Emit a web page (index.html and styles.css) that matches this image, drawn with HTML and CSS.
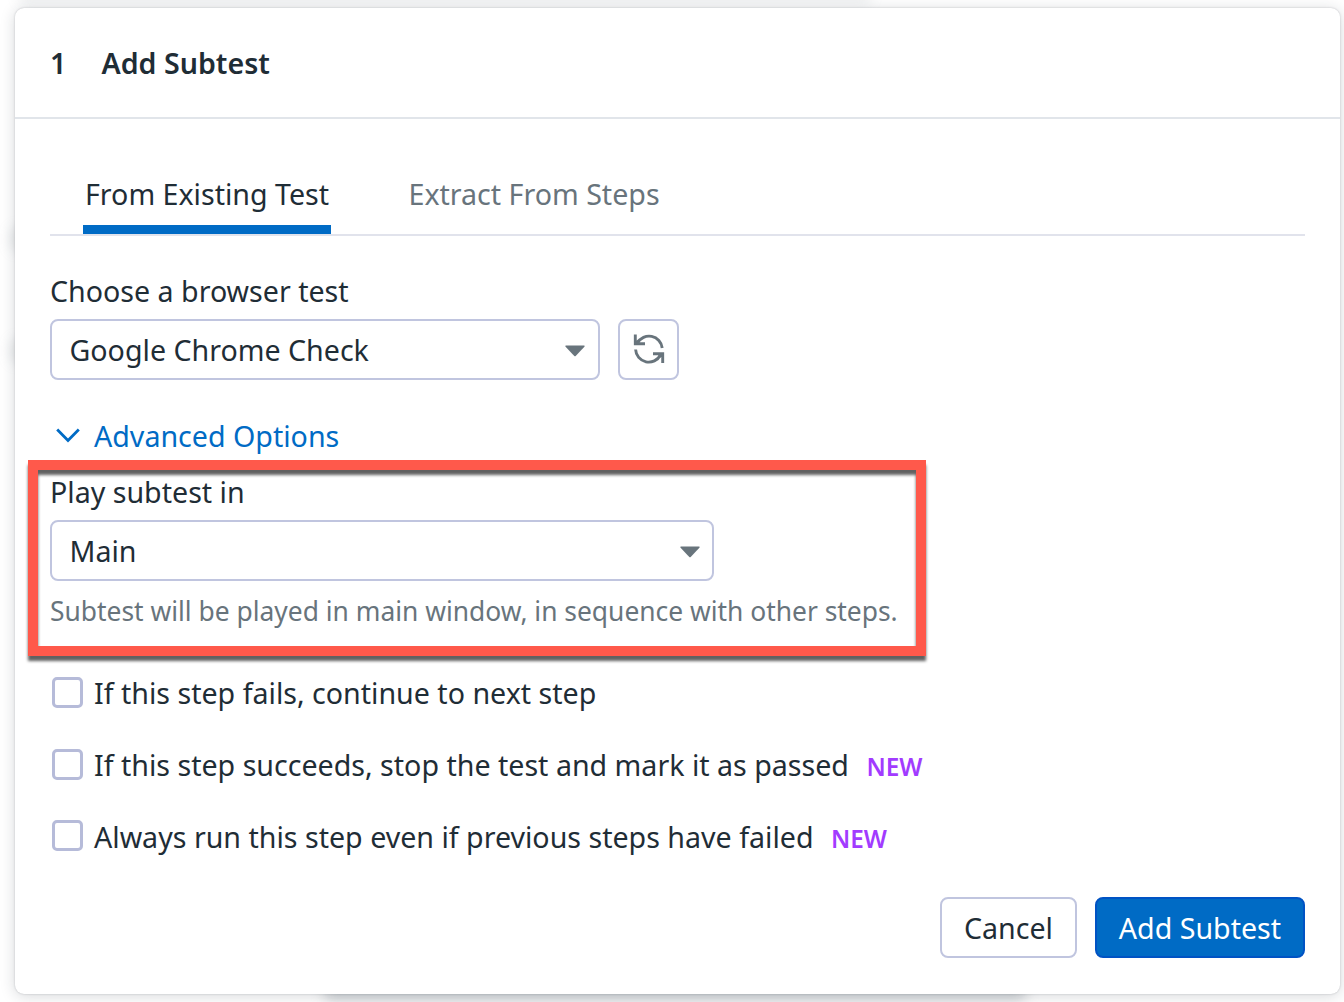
FILE: index.html
```html
<!DOCTYPE html>
<html lang="en">
<head>
<meta charset="utf-8">
<title>Add Subtest</title>
<link rel="stylesheet" href="styles.css">
</head>
<body>
<div class="haze haze-top"></div>
<div class="haze haze-left"></div>
<div class="haze haze-left haze-left-low"></div>
<div class="haze haze-bottom"></div>
<main class="modal">
  <header class="modal-header"><span class="step">1</span><h1>Add Subtest</h1></header>
  <section class="modal-body">
    <nav class="tabs">
      <a class="tab active">From Existing Test</a>
      <a class="tab">Extract From Steps</a>
    </nav>
    <div class="field browser-test">
      <label>Choose a browser test</label>
      <div class="field-row">
        <div class="select select-test"><span>Google Chrome Check</span>
          <svg class="caret" width="20" height="12" viewBox="0 0 20 12"><path d="M1 .5h18q1.2.3.4 1.200L10.700 11q-.7.6-1.400 0L.6 1.700Q-.2.800 1 .5z"/></svg>
        </div>
        <button class="icon-button" aria-label="Refresh">
          <svg width="32" height="32" viewBox="0 0 32 32" fill="none" stroke="currentColor" stroke-width="2.900">
            <path d="M4.500 10A13.200 13.200 0 0 1 29.200 15"/>
            <path d="M2.300 1.500v9.300h9.700M2.500 10.500l3.500-3"/>
            <path d="M2.600 16.500A13.200 13.200 0 0 0 27.500 22"/>
            <path d="M29.700 30v-9.300h-9.700M29.500 21l-3.500 3"/>
          </svg>
        </button>
      </div>
    </div>
    <a class="advanced">
      <svg width="24" height="15" viewBox="0 0 24 15" fill="none" stroke="currentColor" stroke-width="2.800"><path d="M1.200 1.500 12 12.400 22.800 1.500"/></svg>
      <span>Advanced Options</span>
    </a>
    <div class="field play-in">
      <label>Play subtest in</label>
      <div class="select select-window"><span>Main</span>
        <svg class="caret" width="20" height="12" viewBox="0 0 20 12"><path d="M1 .5h18q1.200.3.4 1.200L10.700 11q-.7.6-1.400 0L.6 1.700Q-.2.800 1 .5z"/></svg>
      </div>
      <p class="hint">Subtest will be played in main window, in sequence with other steps.</p>
    </div>
    <div class="checks">
      <label class="check"><i class="box"></i><span>If this step fails, continue to next step</span></label>
      <label class="check"><i class="box"></i><span>If this step succeeds, stop the test and mark it as passed</span><b class="new">NEW</b></label>
      <label class="check"><i class="box"></i><span>Always run this step even if previous steps have failed</span><b class="new">NEW</b></label>
    </div>
    <footer class="actions">
      <button class="button cancel">Cancel</button>
      <button class="button primary">Add Subtest</button>
    </footer>
  </section>
</main>
</body>
</html>
```
FILE: styles.css
```css
*, *::after { box-sizing: border-box; }
body {
  margin: 0;
  width: 1344px;
  height: 1002px;
  padding: 8px 4px 8px 15px;
  overflow: hidden;
  position: relative;
  background: #fff;
  color: #1f2d36;
  font: 28.6px/40px "Noto Sans", sans-serif;
}
button { font: inherit; color: inherit; margin: 0; padding: 0; }
.haze { position: absolute; background: #8d969d; filter: blur(7px); }
.haze-top { left: 20px; top: -9px; width: 850px; height: 11px; opacity: .2; }
.haze-left { left: 12px; top: 228px; width: 12px; height: 22px; opacity: .25; }
.haze-left-low { top: 340px; }
.haze-bottom { left: 325px; top: 985px; width: 700px; height: 14px; opacity: .5; }
.modal {
  position: relative;
  height: 986px;
  background: #fff;
  border-radius: 9px;
  box-shadow: 0 0 2px rgba(30, 40, 50, .25), 0 2px 15px rgba(30, 40, 50, .18);
}
.modal-header {
  display: flex;
  align-items: center;
  height: 111px;
  padding: 0 35px;
  border-bottom: 2px solid #e1e5ea;
  font-weight: 600;
}
.step { width: 51.5px; }
.modal-header h1 { margin: 0; font: inherit; }
.modal-body { padding: 55px 35px 0; }
.tabs {
  display: flex;
  gap: 75.5px;
  height: 62px;
  padding-left: 33px;
  border-bottom: 2px solid #e1e3ec;
}
.tab { height: 60px; padding: 0 2px; color: #68747c; white-space: nowrap; }
.tab.active { width: 248px; border-bottom: 9px solid #006bc5; color: #1f2d36; }
.field { display: flex; flex-direction: column; align-items: flex-start; }
.browser-test { margin-top: 35px; gap: 8px; }
.field-row { display: flex; gap: 18px; }
.select {
  display: flex;
  align-items: center;
  justify-content: space-between;
  height: 61px;
  padding: 0 12px 0 17.5px;
  border: 2px solid #c0c5df;
  border-radius: 8px;
}
.select-test { width: 550px; padding-right: 13px; }
.select-window { width: 664px; }
.caret { margin-top: 2px; fill: #68747c; }
.icon-button {
  display: flex;
  align-items: center;
  justify-content: center;
  width: 61px;
  height: 61px;
  border: 2px solid #c0c5df;
  border-radius: 8px;
  background: #fff;
  color: #68747c;
}
.icon-button svg { margin-top: -1px; }
.advanced { display: flex; align-items: center; gap: 14px; margin-top: 36px; padding-left: 6px; color: #006bc5; }
.advanced svg { flex: none; margin-top: -2px; }
.play-in { position: relative; margin-top: 16px; gap: 8px; }
.play-in::after {
  content: "";
  position: absolute;
  left: -22px;
  top: -12px;
  width: 898px;
  height: 196px;
  border: 10px solid #ff594b;
  filter: drop-shadow(0 5px 1.500px rgba(0, 0, 0, .62));
}
.hint { margin: 2px 0 0; color: #68747c; font-size: 26.4px; white-space: nowrap; }
.checks { display: flex; flex-direction: column; gap: 32px; margin-top: 42px; padding-left: 2px; }
.check { display: flex; align-items: center; height: 40px; white-space: nowrap; }
.box { width: 31px; height: 31px; margin: -2px 11px 0 0; border: 3px solid #b6bbd9; border-radius: 5px; }
.check:last-child .box { margin-top: -4px; }
.new { margin: 3px 0 0 17.5px; color: #a23bff; font-size: 24.3px; font-weight: 600; }
.actions { display: flex; justify-content: flex-end; gap: 18px; margin-top: 40px; }
.button { height: 61px; border: 2px solid #c0c5df; border-radius: 8px; background: #fff; }
.cancel { width: 137px; }
.primary { width: 210px; border-color: #0053c4; background: #006bc5; color: #fff; }
```
